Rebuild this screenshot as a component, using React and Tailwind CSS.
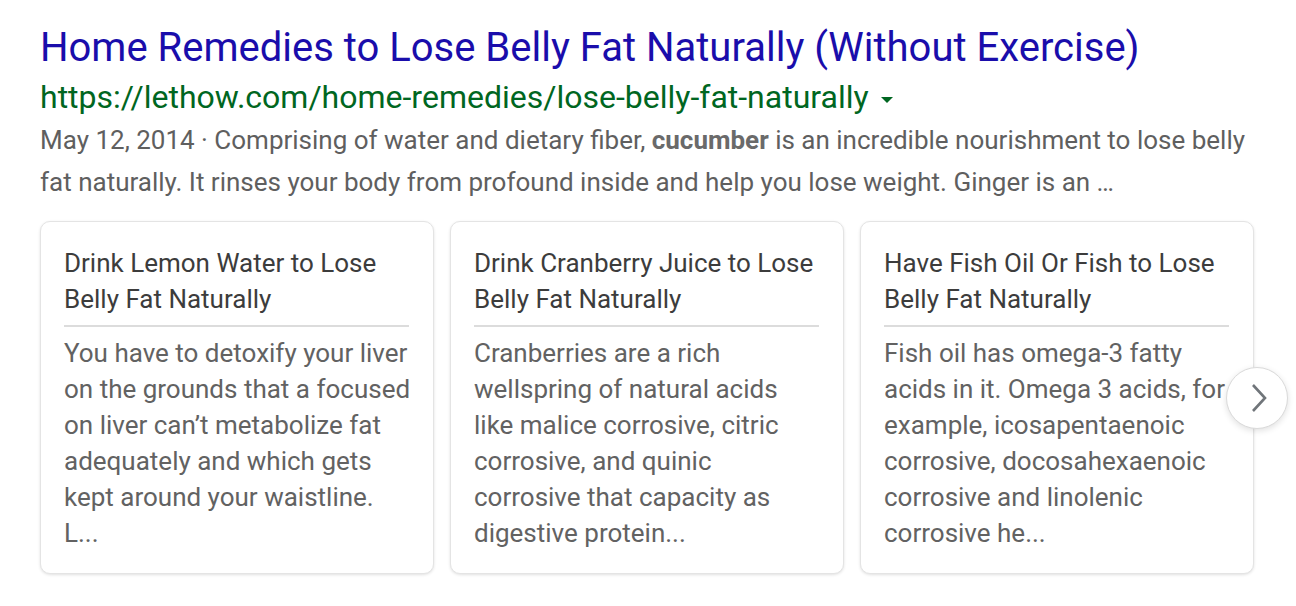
const cards = [
  {
    title: "Drink Lemon Water to Lose Belly Fat Naturally",
    body: "You have to detoxify your liver on the grounds that a focused on liver can’t metabolize fat adequately and which gets kept around your waistline. L...",
  },
  {
    title: "Drink Cranberry Juice to Lose Belly Fat Naturally",
    body: "Cranberries are a rich wellspring of natural acids like malice corrosive, citric corrosive, and quinic corrosive that capacity as digestive protein...",
  },
  {
    title: "Have Fish Oil Or Fish to Lose Belly Fat Naturally",
    body: "Fish oil has omega-3 fatty acids in it. Omega 3 acids, for example, icosapentaenoic corrosive, docosahexaenoic corrosive and linolenic corrosive he...",
  },
];

const App = () => {
  return (
    <div className="min-h-screen w-full bg-white pl-10 pt-6 font-['Roboto',sans-serif]">
      <h1 className="text-[40px] leading-[48px] text-[#1a0dab]">
        Home Remedies to Lose Belly Fat Naturally (Without Exercise)
      </h1>
      <div className="flex items-center mt-[3px] h-[44px]">
        <span className="text-[32px] leading-[44px] text-[#006621]">
          https://lethow.com/home-remedies/lose-belly-fat-naturally
        </span>
        <svg width="14" height="8" viewBox="0 0 14 8" className="ml-[11px] mt-[6px]">
          <path d="M1 1h12L7 7z" fill="#006621" />
        </svg>
      </div>
      <p className="text-[26px] leading-[42px] text-[#5f5f5f] w-[1225px]">
        May 12, 2014 · Comprising of water and dietary fiber, <b className="font-bold text-[#6a6a6a]">cucumber</b> is an
        incredible nourishment to lose belly fat naturally. It rinses your body from profound inside and help you lose
        weight. Ginger is an …
      </p>

      <div className="relative mt-[18px] flex gap-4 w-[1214px]">
        {cards.map((card) => (
          <div
            key={card.title}
            className="w-[394px] h-[353px] rounded-[10px] border border-[#e4e4e4] bg-white pl-[23px] pr-[22px] pt-[23px] shadow-[0_1px_3px_rgba(0,0,0,0.12)]"
          >
            <div className="text-[26px] leading-[36px] text-[#3c3c3c]">{card.title}</div>
            <div className="mt-[8px] mb-[8px] mr-[2px] h-[2px] bg-[#dcdcdc]" />
            <div className="text-[26px] leading-[36px] text-[#626262]">{card.body}</div>
          </div>
        ))}

        <div className="absolute left-[1186px] top-[146px] flex h-[62px] w-[62px] items-center justify-center rounded-full border border-[#dadada] bg-white shadow-[0_2px_6px_rgba(0,0,0,0.12)]">
          <svg width="20" height="32" viewBox="0 0 20 32" className="ml-[3px]">
            <path d="M4 3l12 13L4 29" fill="none" stroke="#70757a" strokeWidth="2.6" />
          </svg>
        </div>
      </div>
    </div>
  );
};

export default App;
